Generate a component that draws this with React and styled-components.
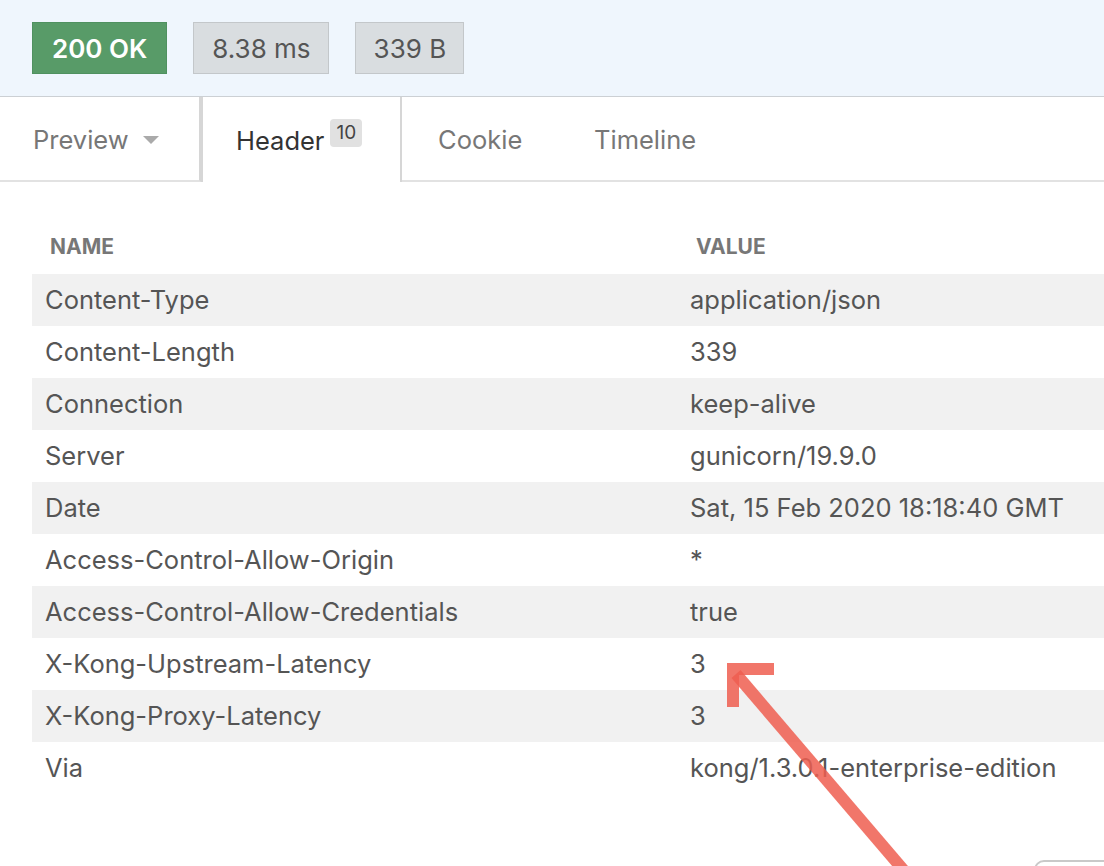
import React from 'react';
import styled, { createGlobalStyle } from 'styled-components';

const Global = createGlobalStyle`
  html, body {
    margin: 0;
    padding: 0;
    background: #fff;
    font-family: Inter, "Liberation Sans", Arial, sans-serif;
    overflow: hidden;
  }
`;

const Page = styled.div`
  position: relative;
  width: 1104px;
  height: 866px;
  overflow: hidden;
  background: #fff;
`;

const StatusBar = styled.div`
  height: 97px;
  box-sizing: border-box;
  background: #eff6fd;
  border-bottom: 1px solid #ccd0d4;
  display: flex;
  align-items: flex-start;
  gap: 26px;
  padding: 22px 0 0 32px;
`;

const Pill = styled.div`
  height: 52px;
  box-sizing: border-box;
  padding: 0 ${p => (p.$ok ? 19 : 17)}px 0 ${p => (p.$ok ? 19 : 18)}px;
  display: flex;
  align-items: center;
  font-size: 26px;
  color: ${p => (p.$ok ? '#fff' : '#555')};
  font-weight: ${p => (p.$ok ? 600 : 400)};
  background: ${p => (p.$ok ? '#589b68' : '#d9dde0')};
  border: 1px solid ${p => (p.$ok ? '#4f9160' : '#c3c7ca')};
`;

const Tabs = styled.div`
  display: flex;
  height: 85px;
`;

const Tab = styled.div`
  width: ${p => p.$w}px;
  box-sizing: border-box;
  display: flex;
  align-items: center;
  padding-top: 2px;
  padding-left: ${p => p.$pl}px;
  font-size: 25.5px;
  color: ${p => (p.$active ? '#333' : '#777')};
  border-bottom: ${p => (p.$active ? 'none' : '2px solid #e2e2e2')};
  border-left: ${p => (p.$active ? '2px solid #d6d6d6' : 'none')};
  border-right: ${p => (p.$active || p.$edge ? '2px solid #d6d6d6' : 'none')};
  ${p => p.$grow && 'flex: 1;'}
`;

const Caret = styled.span`
  width: 0;
  height: 0;
  margin-left: 14px;
  border-left: 8px solid transparent;
  border-right: 8px solid transparent;
  border-top: 8px solid #aaa;
`;

const Count = styled.span`
  align-self: flex-start;
  margin-top: 20px;
  margin-left: 6px;
  padding: 2px 6px 3px;
  font-size: 19px;
  background: #e1e1e1;
  border-radius: 4px;
  color: #444;
`;

const Table = styled.div`
  margin-top: 45px;
  margin-left: 32px;
`;

const HeadRow = styled.div`
  display: grid;
  grid-template-columns: 646px 1fr;
  height: 47px;
  font-size: 21px;
  font-weight: 700;
  color: #777;
  padding-left: 18px;
  box-sizing: border-box;
`;

const HeadCell = styled.span`
  padding-top: 7px;
`;

const Row = styled.div`
  display: grid;
  grid-template-columns: 645px 1fr;
  height: 52px;
  align-items: center;
  padding-left: 13px;
  padding-bottom: 2px;
  box-sizing: border-box;
  font-size: 25.5px;
  color: #555;
  background: ${p => (p.$odd ? '#f1f1f1' : '#fff')};
`;

const Arrow = styled.svg`
  position: absolute;
  left: 0;
  top: 0;
  pointer-events: none;
`;

const Corner = styled.div`
  position: absolute;
  left: 1034px;
  top: 860px;
  width: 120px;
  height: 40px;
  border: 2px solid #c9c9c9;
  border-radius: 10px;
`;

const headers = [
  ['Content-Type', 'application/json'],
  ['Content-Length', '339'],
  ['Connection', 'keep-alive'],
  ['Server', 'gunicorn/19.9.0'],
  ['Date', 'Sat, 15 Feb 2020 18:18:40 GMT'],
  ['Access-Control-Allow-Origin', '*'],
  ['Access-Control-Allow-Credentials', 'true'],
  ['X-Kong-Upstream-Latency', '3'],
  ['X-Kong-Proxy-Latency', '3'],
  ['Via', 'kong/1.3.0.1-enterprise-edition'],
];

const App = () => {
  return (
    <Page>
      <Global />
      <StatusBar>
        <Pill $ok>200 OK</Pill>
        <Pill>8.38 ms</Pill>
        <Pill>339 B</Pill>
      </StatusBar>

      <Tabs>
        <Tab $w={201} $pl={33} $edge>
          Preview
          <Caret />
        </Tab>
        <Tab $w={201} $pl={33} $active>
          Header
          <Count>10</Count>
        </Tab>
        <Tab $w={156} $pl={36}>Cookie</Tab>
        <Tab $w={170} $pl={36}>Timeline</Tab>
        <Tab $grow />
      </Tabs>

      <Table>
        <HeadRow>
          <HeadCell>NAME</HeadCell>
          <HeadCell>VALUE</HeadCell>
        </HeadRow>
        {headers.map(([name, value], i) => (
          <Row key={name} $odd={i % 2 === 0}>
            <span>{name}</span>
            <span>{value}</span>
          </Row>
        ))}
      </Table>

      <Arrow width="1104" height="866" viewBox="0 0 1104 866">
        <g stroke="#ee5e50" strokeOpacity="0.85" strokeWidth="12" fill="none">
          <line x1="912" y1="880" x2="736" y2="674" />
          <polyline points="774,669 733,669 733,707" strokeLinejoin="miter" />
        </g>
      </Arrow>
      <Corner />
    </Page>
  );
};

export default App;
